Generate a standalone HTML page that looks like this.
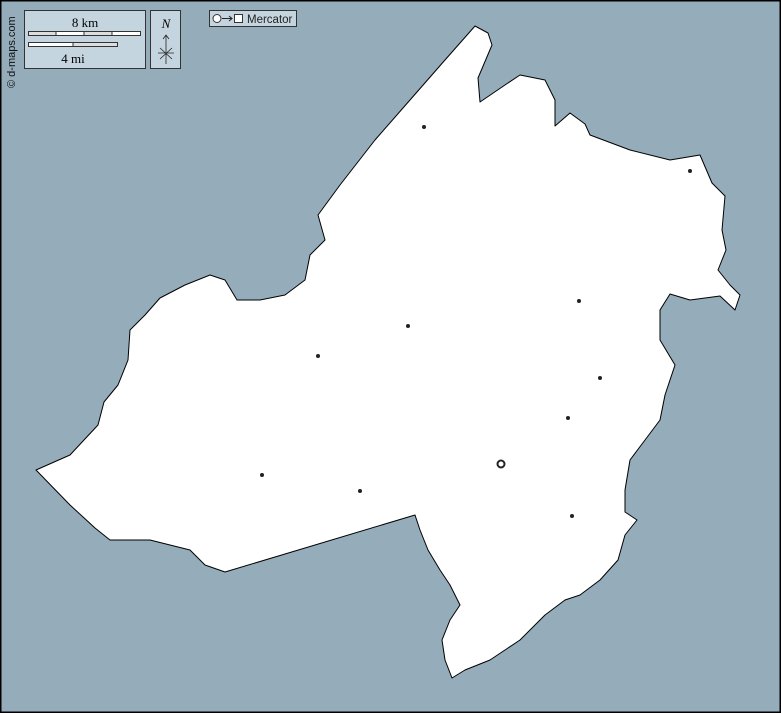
<!DOCTYPE html>
<html><head><meta charset="utf-8"><style>
html,body{margin:0;padding:0;background:#95acbb;}
svg{display:block}
</style></head><body>
<svg width="781" height="713" xmlns="http://www.w3.org/2000/svg">
<rect x="0.5" y="0.5" width="780" height="712" fill="#95acbb" stroke="#000" stroke-width="2"/>
<polygon fill="#fff" stroke="#000" stroke-width="1" stroke-linejoin="round" points="36,470 70,455 98,425 104,402 118,385 128,360 130,330 145,315 160,298 185,285 210,275 225,280 237,300 260,300 285,295 305,280 310,255 325,240 318,215 340,185 375,140 410,100 445,60 475,26 488,33 492,45 478,78 480,102 505,85 520,75 545,80 555,100 555,126 570,113 585,124 590,135 630,150 670,160 700,155 712,183 725,196 722,230 726,250 718,270 730,285 740,295 735,310 720,296 690,300 670,294 660,310 660,340 675,365 665,395 660,420 645,440 630,460 625,490 625,512 637,520 625,535 618,560 600,580 580,595 565,600 545,615 520,640 490,660 465,670 452,678 445,660 442,640 450,620 460,605 450,585 440,570 428,550 420,530 415,515 225,572 205,565 190,550 150,540 110,540 95,528 70,505"/>
<g fill="#222">
<circle cx="424" cy="127" r="2"/><circle cx="690" cy="171" r="2"/><circle cx="579" cy="301" r="2"/>
<circle cx="408" cy="326" r="2"/><circle cx="318" cy="356" r="2"/><circle cx="600" cy="378" r="2"/>
<circle cx="568" cy="418" r="2"/><circle cx="262" cy="475" r="2"/><circle cx="360" cy="491" r="2"/>
<circle cx="572" cy="516" r="2"/>
</g>
<circle cx="501" cy="464" r="3.5" fill="#fff" stroke="#222" stroke-width="2"/>
<rect x="24.5" y="10.5" width="121" height="58" fill="#c5d5df" stroke="#333"/>
<text x="85" y="27" font-family="Liberation Serif" font-size="13" text-anchor="middle">8 km</text>
<rect x="28.5" y="31.5" width="112" height="4" fill="#fff" stroke="#333"/>
<rect x="29" y="32" width="27" height="3" fill="#ddd"/><rect x="84" y="32" width="28" height="3" fill="#ddd"/>
<line x1="56" y1="31" x2="56" y2="36" stroke="#333"/><line x1="84" y1="31" x2="84" y2="36" stroke="#333"/><line x1="112" y1="31" x2="112" y2="36" stroke="#333"/>
<rect x="28.5" y="42.5" width="89" height="4" fill="#ddd" stroke="#333"/>
<rect x="29" y="43" width="44" height="3" fill="#fff"/>
<line x1="73" y1="42" x2="73" y2="47" stroke="#333"/>
<text x="73" y="63" font-family="Liberation Serif" font-size="13" text-anchor="middle">4 mi</text>
<rect x="150.5" y="10.5" width="30" height="58" fill="#c5d5df" stroke="#333"/>
<text x="166" y="28" font-family="Liberation Serif" font-style="italic" font-size="13" text-anchor="middle">N</text>
<path d="M166 35 V64 M163 39 L166 35 L169 39 M158 53 H174 M160 48 L172 59 M172 48 L160 59" stroke="#222" fill="none" stroke-width="0.8"/>
<text transform="translate(15,88) rotate(-90)" font-family="Liberation Sans" font-size="11" fill="#111">© d-maps.com</text>
<rect x="209.5" y="10.5" width="87" height="16" fill="#c5d5df" stroke="#333"/>
<circle cx="217" cy="18.5" r="4" fill="#fff" stroke="#333"/>
<path d="M222 18.5 H232 M229 16 L232 18.5 L229 21" stroke="#222" fill="none"/>
<rect x="234.5" y="14.5" width="8" height="8" fill="#fff" stroke="#333"/>
<text x="247" y="23" font-family="Liberation Sans" font-size="11.5" fill="#222">Mercator</text>
</svg>
</body></html>
